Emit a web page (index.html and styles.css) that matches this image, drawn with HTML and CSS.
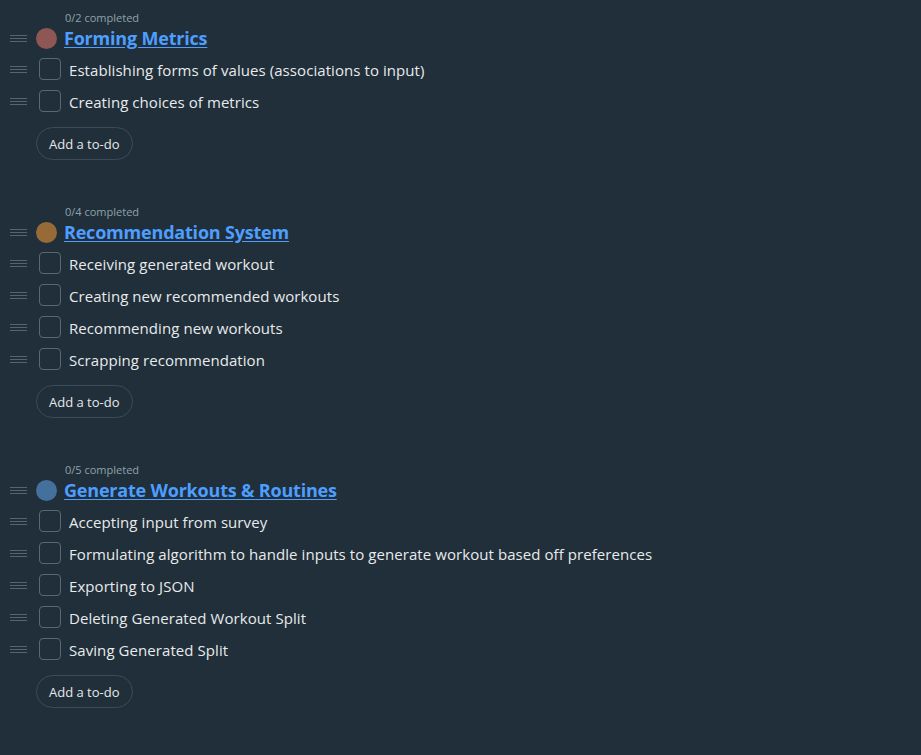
FILE: index.html
```html
<!DOCTYPE html>
<html lang="en">
<head>
<meta charset="utf-8">
<title>To-do lists</title>
<link rel="stylesheet" href="styles.css">
</head>
<body>
<main class="lists">
  <section class="group">
    <div class="count">0/2 completed</div>
    <div class="head">
      <span class="handle"><i></i><i></i><i></i></span>
      <span class="dot dot-red"></span>
      <a class="title" href="#">Forming Metrics</a>
    </div>
    <div class="task"><span class="handle"><i></i><i></i><i></i></span><span class="box"></span><span class="label">Establishing forms of values (associations to input)</span></div>
    <div class="task"><span class="handle"><i></i><i></i><i></i></span><span class="box"></span><span class="label">Creating choices of metrics</span></div>
    <button class="add">Add a to-do</button>
  </section>

  <section class="group">
    <div class="count">0/4 completed</div>
    <div class="head">
      <span class="handle"><i></i><i></i><i></i></span>
      <span class="dot dot-orange"></span>
      <a class="title" href="#">Recommendation System</a>
    </div>
    <div class="task"><span class="handle"><i></i><i></i><i></i></span><span class="box"></span><span class="label">Receiving generated workout</span></div>
    <div class="task"><span class="handle"><i></i><i></i><i></i></span><span class="box"></span><span class="label">Creating new recommended workouts</span></div>
    <div class="task"><span class="handle"><i></i><i></i><i></i></span><span class="box"></span><span class="label">Recommending new workouts</span></div>
    <div class="task"><span class="handle"><i></i><i></i><i></i></span><span class="box"></span><span class="label">Scrapping recommendation</span></div>
    <button class="add">Add a to-do</button>
  </section>

  <section class="group">
    <div class="count">0/5 completed</div>
    <div class="head">
      <span class="handle"><i></i><i></i><i></i></span>
      <span class="dot dot-blue"></span>
      <a class="title" href="#">Generate Workouts &amp; Routines</a>
    </div>
    <div class="task"><span class="handle"><i></i><i></i><i></i></span><span class="box"></span><span class="label">Accepting input from survey</span></div>
    <div class="task"><span class="handle"><i></i><i></i><i></i></span><span class="box"></span><span class="label">Formulating algorithm to handle inputs to generate workout based off preferences</span></div>
    <div class="task"><span class="handle"><i></i><i></i><i></i></span><span class="box"></span><span class="label">Exporting to JSON</span></div>
    <div class="task"><span class="handle"><i></i><i></i><i></i></span><span class="box"></span><span class="label">Deleting Generated Workout Split</span></div>
    <div class="task"><span class="handle"><i></i><i></i><i></i></span><span class="box"></span><span class="label">Saving Generated Split</span></div>
    <button class="add">Add a to-do</button>
  </section>
</main>
</body>
</html>
```

FILE: styles.css
```css
html, body {
  margin: 0;
  padding: 0;
  background: #202f39;
  height: 100%;
}
body {
  font-family: "Open Sans", "Noto Sans", sans-serif;
  color: #e6e8ea;
}
.lists {
  padding: 10px 0 0 10px;
  display: flex;
  flex-direction: column;
  gap: 44px;
}
.group {
  display: flex;
  flex-direction: column;
  align-items: flex-start;
}
.count {
  height: 16px;
  line-height: 16px;
  font-size: 11px;
  color: #8fa3ad;
  margin-left: 55px;
}
.head {
  height: 24px;
  display: flex;
  align-items: center;
  margin-bottom: 3px;
}
.handle {
  width: 17px;
  display: flex;
  flex-direction: column;
  gap: 2px;
}
.handle i {
  display: block;
  height: 1px;
  background: #56646d;
}
.dot {
  width: 21px;
  height: 21px;
  border-radius: 50%;
  margin-left: 9px;
  margin-right: 7px;
}
.dot-red { background: #8e5753; }
.dot-orange { background: #966b37; }
.dot-blue { background: #44709e; }
.title {
  font-size: 18px;
  font-weight: 700;
  color: #4d9eff;
  text-decoration: underline;
  text-underline-offset: 2px;
  letter-spacing: -0.2px;
}
.task {
  height: 32px;
  display: flex;
  align-items: center;
}
.box {
  width: 20px;
  height: 20px;
  border: 1px solid #5b6870;
  border-radius: 4px;
  margin-left: 12px;
  margin-right: 8px;
}
.label {
  font-size: 15px;
  line-height: 20px;
  padding-top: 2px;
  color: #e8eaec;
  letter-spacing: 0.07px;
}
.add {
  margin: 10px 0 0 26px;
  height: 33px;
  padding: 0 12px;
  border: 1px solid #3d4b54;
  border-radius: 17px;
  background: transparent;
  color: #e6e8ea;
  font-family: "Open Sans", "Noto Sans", sans-serif;
  font-size: 13px;
}
```
